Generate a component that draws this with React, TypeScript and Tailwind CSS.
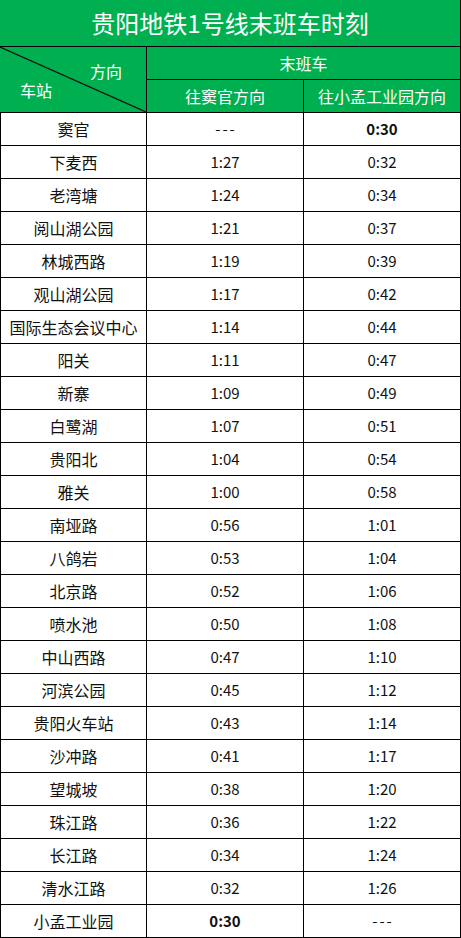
import React from "react";

const rows: [string, string, string][] = [
  ["窦官", "---", "0:30"],
  ["下麦西", "1:27", "0:32"],
  ["老湾塘", "1:24", "0:34"],
  ["阅山湖公园", "1:21", "0:37"],
  ["林城西路", "1:19", "0:39"],
  ["观山湖公园", "1:17", "0:42"],
  ["国际生态会议中心", "1:14", "0:44"],
  ["阳关", "1:11", "0:47"],
  ["新寨", "1:09", "0:49"],
  ["白鹭湖", "1:07", "0:51"],
  ["贵阳北", "1:04", "0:54"],
  ["雅关", "1:00", "0:58"],
  ["南垭路", "0:56", "1:01"],
  ["八鸽岩", "0:53", "1:04"],
  ["北京路", "0:52", "1:06"],
  ["喷水池", "0:50", "1:08"],
  ["中山西路", "0:47", "1:10"],
  ["河滨公园", "0:45", "1:12"],
  ["贵阳火车站", "0:43", "1:14"],
  ["沙冲路", "0:41", "1:17"],
  ["望城坡", "0:38", "1:20"],
  ["珠江路", "0:36", "1:22"],
  ["长江路", "0:34", "1:24"],
  ["清水江路", "0:32", "1:26"],
  ["小孟工业园", "0:30", "---"],
];

const font = { fontFamily: '"Noto Sans CJK SC", "Noto Sans", sans-serif' };

function Cell({ v }: { v: string }) {
  const cls =
    v === "0:30"
      ? "font-bold"
      : v === "---"
      ? "tracking-[2px] pl-[2px]"
      : "";
  return (
    <div
      className={`w-[157px] border-r border-b border-black flex items-center justify-center text-[15px] ${cls}`}
    >
      {v}
    </div>
  );
}

export default function App() {
  return (
    <div className="w-[461px] bg-white text-[#111]" style={font}>
      {/* Title */}
      <div className="h-[47px] bg-[#00b050] border-r border-b border-black flex items-center justify-center text-white text-[24px] leading-none">
        贵阳地铁1号线末班车时刻
      </div>
      {/* Header */}
      <div className="flex h-[66px] bg-[#00b050] text-white text-[16px] leading-none">
        <div className="relative w-[147px] border-r border-b border-black">
          <svg className="absolute inset-0" width="146" height="65" viewBox="0 0 146 65">
            <line x1="0" y1="0" x2="146" y2="65" stroke="#111" strokeWidth="1.2" />
          </svg>
          <div className="absolute right-[24px] top-[16px]">方向</div>
          <div className="absolute left-[20px] top-[35px]">车站</div>
        </div>
        <div className="flex flex-col w-[314px]">
          <div className="h-[33px] border-r border-b border-black flex items-center justify-center">末班车</div>
          <div className="flex h-[33px]">
            <div className="w-[157px] border-r border-b border-black flex items-center justify-center">往窦官方向</div>
            <div className="w-[157px] border-r border-b border-black flex items-center justify-center">往小孟工业园方向</div>
          </div>
        </div>
      </div>
      {/* Rows */}
      <div className="border-l border-black">
        {rows.map(([name, a, b]) => (
          <div key={name} className="flex h-[33px]">
            <div className="w-[146px] border-r border-b border-black flex items-center justify-center text-[16px]">
              {name}
            </div>
            <Cell v={a} />
            <Cell v={b} />
          </div>
        ))}
      </div>
    </div>
  );
}
